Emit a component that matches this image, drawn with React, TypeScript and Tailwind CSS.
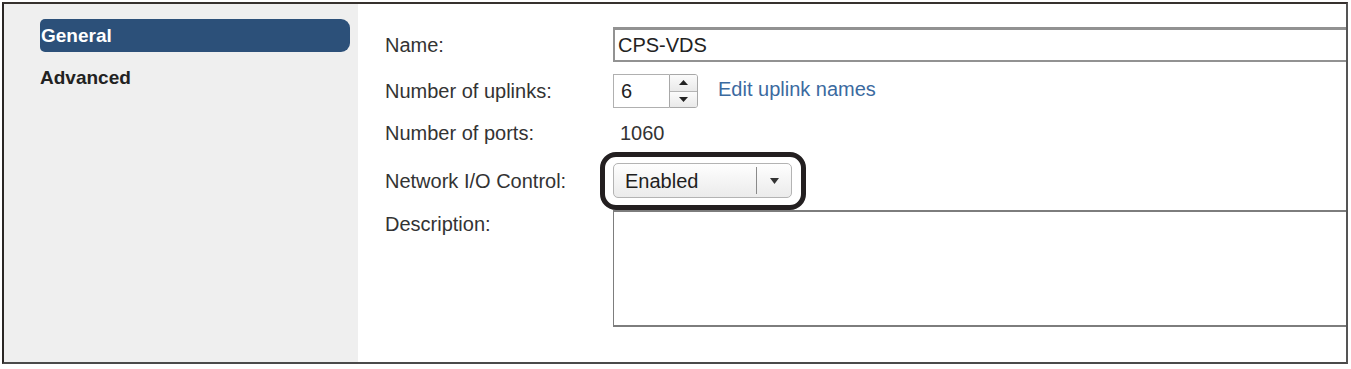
import React from "react";

const font = { fontFamily: '"Liberation Sans", Arial, sans-serif' };

export default function App() {
  return (
    <div className="w-[1351px] h-[369px] bg-white pt-[2px] pl-[2px]" style={font}>
      <div className="w-[1346px] h-[362px] border-2 border-t-[#36312e] border-l-[#2a2624] border-r-[#555555] border-b-[#4a4a4a] flex overflow-hidden">
        {/* Sidebar */}
        <div className="w-[354px] h-full bg-[#efefef] pt-[15px] pl-[36px] pr-[4px] flex flex-col">
          <div className="h-[33px] w-[310px] bg-[#2c5079] rounded-l-[5px] rounded-r-[9px] flex items-center pl-[1px]">
            <span className="text-[19px] font-bold text-white leading-none">General</span>
          </div>
          <div className="mt-[13px] h-[24px] flex items-center">
            <span className="text-[19px] font-bold text-[#222] leading-none">Advanced</span>
          </div>
        </div>

        {/* Main */}
        <div className="flex-1 h-full bg-white pt-[23px] pl-[27px] overflow-hidden text-[20px] text-[#333]">
          <div className="grid grid-cols-[228px_1fr]">
            {/* Name */}
            <div className="h-[35px] flex items-center">Name:</div>
            <div className="h-[35px] border-t-[3px] border-b-2 border-l-2 border-[#929292] flex items-center pl-[3px] text-[#222]">
              CPS-VDS
            </div>

            {/* Uplinks */}
            <div className="mt-[12px] h-[34px] flex items-center">Number of uplinks:</div>
            <div className="mt-[12px] h-[34px] flex items-center">
              <div className="flex h-[34px]">
                <div className="w-[56px] h-full border border-[#b0b0b0] border-r-0 flex items-center pl-[7px] text-[#222]">6</div>
                <div className="w-[29px] h-full flex flex-col border border-[#a8a8a8] rounded-r-[3px] overflow-hidden">
                  <div className="flex-1 bg-gradient-to-b from-[#fbfbfb] to-[#e9e9e9] border-b border-[#b5b5b5] flex items-center justify-center">
                    <svg width="9" height="5" viewBox="0 0 9 5"><path d="M0 5 L4.5 0 L9 5 Z" fill="#222" /></svg>
                  </div>
                  <div className="flex-1 bg-gradient-to-b from-[#fbfbfb] to-[#e9e9e9] flex items-center justify-center">
                    <svg width="9" height="5" viewBox="0 0 9 5"><path d="M0 0 L4.5 5 L9 0 Z" fill="#222" /></svg>
                  </div>
                </div>
              </div>
              <span className="ml-[20px] text-[#3b6aa0] -mt-[4px]">Edit uplink names</span>
            </div>

            {/* Ports */}
            <div className="mt-[13px] h-[24px] flex items-center">Number of ports:</div>
            <div className="mt-[13px] h-[24px] flex items-center pl-[7px]">1060</div>

            {/* Network I/O */}
            <div className="mt-[18px] h-[35px] flex items-center">Network I/O Control:</div>
            <div className="mt-[18px] h-[35px] flex items-center">
              <div className="relative">
                <div className="w-[179px] h-[35px] rounded-[5px] border border-[#b3b3b3] bg-gradient-to-b from-[#fefefe] to-[#ebebeb] flex items-center">
                  <span className="pl-[11px] w-[142px] text-[#1e1e1e]">Enabled</span>
                  <div className="w-px h-[27px] bg-[#8a8a8a]" />
                  <div className="flex-1 flex items-center justify-center">
                    <svg width="9" height="6" viewBox="0 0 9 6"><path d="M0 0 L9 0 L4.5 6 Z" fill="#333" /></svg>
                  </div>
                </div>
                <div className="absolute left-[-13px] right-[-14px] top-[-11px] bottom-[-12px] border-[5px] border-[#231f20] rounded-[16px] pointer-events-none z-10" />
              </div>
            </div>

            {/* Description */}
            <div className="mt-[12px] pt-[2px] leading-[24px]">Description:</div>
            <div className="mt-[12px] h-[117px] border-t-2 border-b-2 border-l border-[#7d7d7d]" />
          </div>
        </div>
      </div>
    </div>
  );
}
